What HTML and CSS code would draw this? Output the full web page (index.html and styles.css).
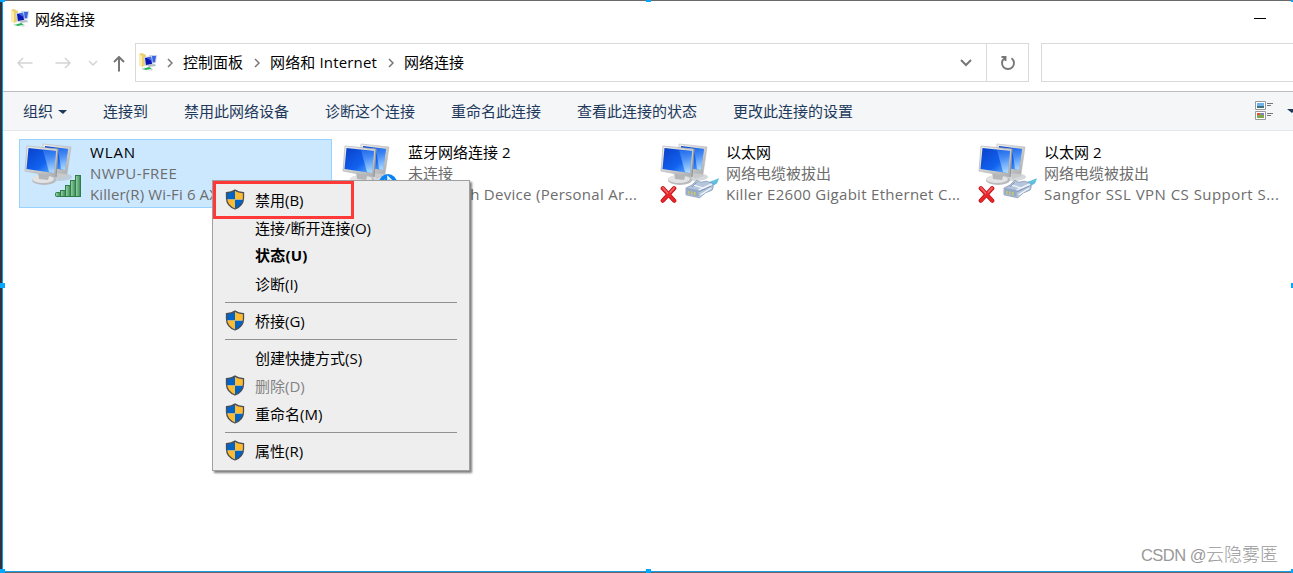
FILE: index.html
```html
<!DOCTYPE html>
<html lang="zh-CN">
<head>
    <meta charset="UTF-8">
    <meta name="viewport" content="width=device-width, initial-scale=1.0">
    <title>网络连接</title>
    <link rel="stylesheet" href="styles.css">
</head>
<body>

<!-- Shared icons -->
<svg class="defs" width="0" height="0">
    <defs>
        <linearGradient id="screenBlue" x1="0" y1="0" x2="1" y2="1">
            <stop offset="0" stop-color="#0a3fc8"/>
            <stop offset="0.6" stop-color="#1163f0"/>
            <stop offset="1" stop-color="#6db8ff"/>
        </linearGradient>
        <linearGradient id="shine" x1="0" y1="0" x2="0" y2="1">
            <stop offset="0" stop-color="#4a92f8" stop-opacity=".4"/>
            <stop offset="1" stop-color="#c8e8ff" stop-opacity=".8"/>
        </linearGradient>
        <linearGradient id="metal" x1="0" y1="0" x2="1" y2="1">
            <stop offset="0" stop-color="#f4f4f2"/>
            <stop offset="1" stop-color="#a9aaac"/>
        </linearGradient>
        <linearGradient id="barGreen" x1="0" y1="0" x2="1" y2="0">
            <stop offset="0" stop-color="#9fd6a8"/>
            <stop offset="1" stop-color="#358a55"/>
        </linearGradient>
        <symbol id="folder" viewBox="0 0 20 20">
            <path d="M1 1 L4 0 L8 2 L8 12 L4 14 L1 12 Z" fill="#ecd070"/>
            <path d="M1 1 L4 3 L4 14 L1 12 Z" fill="#fbedb0"/>
            <path d="M11 2 L19 2 L18 10 L12 11 Z" fill="#c5d3ec"/>
            <path d="M12 3 L18 3 L17 9 L12 10 Z" fill="#3b62dc"/>
            <path d="M6 4 L14 3 L15 12 L7 13 Z" fill="#c9d5ea"/>
            <path d="M7 5 L13 4 L14 11 L8 12 Z" fill="#0a17b4"/>
            <path d="M9 5 L13 4 L13.500 8 Z" fill="#3c6cf0"/>
            <path d="M9 12 L17 11 L18 13 L11 14 Z" fill="#b8c0c8"/>
            <path d="M4 16 L11 14 L14 15.500 L8 17 Z" fill="#25b454"/>
            <path d="M3 15.500 L7 14.500 L6 16.500 Z" fill="#b9ddc2"/>
            <path d="M8 17 L15 16 L14 17.500 Z" fill="#c3cdc8"/>
        </symbol>
        <symbol id="monitors" viewBox="0 0 58 60">
            <ellipse cx="35" cy="34" rx="13" ry="4" fill="#aeb3b9" opacity=".5"/>
            <path d="M32 28 L41 28 L44 33 L34 36 Z" fill="#c8cacc"/>
            <path d="M19 1 L47 4 L43 31 L18 28 Z" fill="url(#metal)" stroke="#b5b7ba" stroke-width=".6"/>
            <path d="M21 3 L44 6 L41 27 L20 24 Z" fill="url(#screenBlue)"/>
            <path d="M34 5 L44 6 L41 27 L37 26 Z" fill="url(#shine)"/>
            <ellipse cx="20" cy="37" rx="12" ry="5" fill="#b8babd"/>
            <ellipse cx="19" cy="36" rx="11" ry="4" fill="#e3e3e3"/>
            <path d="M14 28 L26 30 L24 37 L15 36 Z" fill="#b4b6b8"/>
            <path d="M3 3 L34 6 L32 34 L1 28 Z" fill="url(#metal)" stroke="#b3b5b8" stroke-width=".7"/>
            <path d="M4.500 5 L32 8 L30 30 L2.500 26 Z" fill="url(#screenBlue)"/>
            <path d="M19 7 L32 8 L30 30 L25 29 Z" fill="url(#shine)"/>
            <path d="M34 6 L32 34" stroke="#909397" stroke-width="1"/>
        </symbol>
        <symbol id="signal" viewBox="0 0 27 23">
            <g fill="url(#barGreen)" stroke="#2f7c4b" stroke-width="1">
                <rect x=".5" y="17.500" width="5" height="4" rx="1"/>
                <rect x="5.500" y="15.500" width="5" height="6"/>
                <rect x="10.500" y="10.500" width="5" height="11"/>
                <rect x="15.500" y="5.500" width="5" height="16"/>
                <rect x="20.500" y=".5" width="5" height="21"/>
            </g>
        </symbol>
        <symbol id="cross" viewBox="0 0 18 18">
            <path d="M3 3 L15 16 M15 3 L3 16" stroke="#c01419" stroke-width="4.600" stroke-linecap="round"/>
            <path d="M3 3 L15 16 M15 3 L3 16" stroke="#e8262c" stroke-width="3" stroke-linecap="round"/>
            <path d="M3 2.500 L8 8 M15 2.500 L11 7" stroke="#f0686c" stroke-width="1.600" stroke-linecap="round"/>
        </symbol>
        <symbol id="cable" viewBox="0 0 36 22">
            <path d="M24 4 L35 0 L33 5 L27 9 Z" fill="#5abde0"/>
            <path d="M26 5 L35 1 L31 3 Z" fill="#b5e6f5"/>
            <path d="M1 10 L7 7 L12 2 L16 4 L22 3 L28 5 L29 9 L28 12 L21 15 L15 20 L1 17 Z" fill="#b4c5dc" stroke="#8397b2" stroke-width=".8"/>
            <path d="M2 10 L14 12 L14 19 L2 16 Z" fill="#93a9c6"/>
            <path d="M14 12 L27 6 M9 7 L19 10 L28 6 M16 17 L27 10" stroke="#edf4fb" stroke-width="1.400" fill="none"/>
            <path d="M14 14 L27 8 M7 9 L12 4" stroke="#6f86a8" stroke-width=".8"/>
            <path d="M4 13 v3 M7 13.500 v3.500 M10 14 v3.500" stroke="#d1ca68" stroke-width="1.500"/>
        </symbol>
        <symbol id="shield" viewBox="0 0 20 21">
            <clipPath id="shieldClip"><path d="M10 1 C7.500 3 4.500 3.600 1.500 3.600 V9 C1.500 14 5 18 10 20 C15 18 18.500 14 18.500 9 V3.600 C15.500 3.600 12.500 3 10 1 Z"/></clipPath>
            <g clip-path="url(#shieldClip)">
                <path d="M0 0 H10 V10.500 H0 Z M10 10.500 H20 V21 H10 Z" fill="#0063c6"/>
                <path d="M10 0 H20 V10.500 H10 Z M0 10.500 H10 V21 H0 Z" fill="#fdbb31"/>
            </g>
            <path d="M10 1 C7.500 3 4.500 3.600 1.500 3.600 V9 C1.500 14 5 18 10 20 C15 18 18.500 14 18.500 9 V3.600 C15.500 3.600 12.500 3 10 1 Z" fill="none" stroke="#4b4f55" stroke-width="1.300"/>
        </symbol>
    </defs>
</svg>

<div class="window">
    <header class="title-bar">
        <svg class="title-icon"><use href="#folder"/></svg>
        <span class="title">网络连接</span>
        <span class="minimize"></span>
    </header>

    <nav class="nav-bar">
        <div class="nav-buttons">
            <svg class="arrow" width="16" height="12" viewBox="0 0 16 12"><path d="M6 1 L1 6 L6 11 M1 6 H15.500"/></svg>
            <svg class="arrow forward" width="16" height="12" viewBox="0 0 16 12"><path d="M10 1 L15 6 L10 11 M15 6 H.5"/></svg>
            <svg class="arrow recent" width="10" height="6" viewBox="0 0 10 6"><path d="M1 1 L5 5 L9 1"/></svg>
            <svg class="arrow up" width="12" height="16" viewBox="0 0 12 16"><path d="M1 6 L6 1 L11 6 M6 1 V15.500"/></svg>
        </div>
        <div class="address">
            <svg class="address-icon"><use href="#folder"/></svg>
            <svg class="chevron root" width="6" height="10" viewBox="0 0 6 10"><path d="M1 1 L5 5 L1 9"/></svg>
            <span class="crumb">控制面板</span>
            <svg class="chevron" width="6" height="10" viewBox="0 0 6 10"><path d="M1 1 L5 5 L1 9"/></svg>
            <span class="crumb crumb-internet">网络和 Internet</span>
            <svg class="chevron" width="6" height="10" viewBox="0 0 6 10"><path d="M1 1 L5 5 L1 9"/></svg>
            <span class="crumb">网络连接</span>
            <svg class="chevron dropdown" width="12" height="8" viewBox="0 0 12 8"><path d="M1 1 L6 6 L11 1"/></svg>
            <span class="refresh">
                <svg width="16" height="16" viewBox="0 0 16 16"><path d="M11.500 3.200 A6 6 0 1 1 4.500 3.200 M1.500 2 H5.500 V6" fill="none" stroke="#777" stroke-width="1.900"/></svg>
            </span>
        </div>
        <div class="search"></div>
    </nav>

    <div class="toolbar">
        <span class="tool">组织 <i class="caret"></i></span>
        <span class="tool">连接到</span>
        <span class="tool">禁用此网络设备</span>
        <span class="tool">诊断这个连接</span>
        <span class="tool">重命名此连接</span>
        <span class="tool">查看此连接的状态</span>
        <span class="tool">更改此连接的设置</span>
        <svg class="view-icon" width="18" height="19" viewBox="0 0 18 19">
            <path d="M.5 .5 H10.500 V8.500 H.5 Z M.5 10.500 H10.500 V18.500 H.5 Z" fill="#fff" stroke="#9a9a9a"/>
            <rect x="2" y="2" width="7" height="3" fill="#6fb2f0"/>
            <rect x="2" y="5" width="7" height="2" fill="#3e7375"/>
            <rect x="2" y="12" width="7" height="5" fill="#7da94b"/>
            <rect x="2" y="12" width="3" height="2" fill="#e0553b"/>
            <rect x="6" y="12" width="3" height="2" fill="#8a7bd0"/>
            <path d="M12 2.500 H18 M12 4.500 H16 M12 12.500 H18 M12 14.500 H16" stroke="#777"/>
        </svg>
        <i class="caret view-caret"></i>
    </div>

    <main class="connections">
        <div class="connection selected">
            <div class="device">
                <svg class="monitors"><use href="#monitors"/></svg>
                <svg class="signal"><use href="#signal"/></svg>
            </div>
            <div class="info">
                <div class="name name-wlan">WLAN</div>
                <div class="status status-wlan">NWPU-FREE</div>
                <div class="adapter adapter-wlan">Killer(R) Wi-Fi 6 AX1650s</div>
            </div>
        </div>
        <div class="connection">
            <div class="device">
                <svg class="monitors"><use href="#monitors"/></svg>
                <svg class="bluetooth" width="18" height="18" viewBox="0 0 18 18"><circle cx="9" cy="9" r="9" fill="#0a84f5"/><path d="M5 6 L12 12 L9 15 V3 L12 6 L5 12" fill="none" stroke="#fff" stroke-width="1.500"/></svg>
            </div>
            <div class="info">
                <div class="name">蓝牙网络连接 2</div>
                <div class="status">未连接</div>
                <div class="adapter">Bluetooth Device (Personal Ar...</div>
            </div>
        </div>
        <div class="connection">
            <div class="device">
                <svg class="monitors"><use href="#monitors"/></svg>
                <svg class="cross"><use href="#cross"/></svg>
                <svg class="cable"><use href="#cable"/></svg>
            </div>
            <div class="info">
                <div class="name">以太网</div>
                <div class="status">网络电缆被拔出</div>
                <div class="adapter">Killer E2600 Gigabit Ethernet C...</div>
            </div>
        </div>
        <div class="connection">
            <div class="device">
                <svg class="monitors"><use href="#monitors"/></svg>
                <svg class="cross"><use href="#cross"/></svg>
                <svg class="cable"><use href="#cable"/></svg>
            </div>
            <div class="info">
                <div class="name">以太网 2</div>
                <div class="status">网络电缆被拔出</div>
                <div class="adapter adapter-sangfor">Sangfor SSL VPN CS Support S...</div>
            </div>
        </div>
    </main>
</div>

<!-- Right-click menu -->
<div class="context-menu">
    <div class="menu-item"><svg class="shield"><use href="#shield"/></svg><span>禁用(B)</span></div>
    <div class="menu-item"><span>连接/断开连接(O)</span></div>
    <div class="menu-item default"><span>状态(U)</span></div>
    <div class="menu-item"><span>诊断(I)</span></div>
    <div class="separator"></div>
    <div class="menu-item"><svg class="shield"><use href="#shield"/></svg><span>桥接(G)</span></div>
    <div class="separator"></div>
    <div class="menu-item"><span>创建快捷方式(S)</span></div>
    <div class="menu-item disabled"><svg class="shield"><use href="#shield"/></svg><span>删除(D)</span></div>
    <div class="menu-item"><svg class="shield"><use href="#shield"/></svg><span>重命名(M)</span></div>
    <div class="separator"></div>
    <div class="menu-item"><svg class="shield"><use href="#shield"/></svg><span>属性(R)</span></div>
    <div class="highlight"></div>
</div>

<div class="watermark"><span class="site">CSDN @</span>云隐雾匿</div>

<!-- Selection handles -->
<i class="handle top-left"></i>
<i class="handle top"></i>
<i class="handle top-right"></i>
<i class="handle left"></i>
<i class="handle right"></i>
<i class="handle bottom-left"></i>
<i class="handle bottom"></i>
<i class="handle bottom-right"></i>

</body>
</html>
```
FILE: styles.css
```css
* {
    box-sizing: border-box;
}
body {
    margin: 0;
    width: 1293px;
    height: 573px;
    position: relative;
    overflow: hidden;
    background-color: #fff;
    font-family: "Open Sans", "Noto Sans CJK SC", sans-serif;
    font-size: 15px;
    color: #000;
}
svg {
    display: block;
    flex: none;
}
.defs {
    position: absolute;
}
.window {
    height: 573px;
    border-top: 1px solid #6b696a;
    border-left: 2px solid #30343a;
    border-bottom: 1px solid #666;
    box-shadow: inset 1px 0 0 #00a2f2, inset 0 -1px 0 #1b9be0;
}

/* Title bar */
.title-bar {
    display: flex;
    align-items: center;
    height: 38px;
    padding: 0 27px 3px 8px;
}
.title-icon, .address-icon {
    width: 20px;
    height: 20px;
}
.title {
    margin-left: 5px;
}
.minimize {
    width: 12px;
    height: 1px;
    margin-left: auto;
    background-color: #000;
}

/* Navigation */
.nav-bar {
    display: flex;
    height: 52px;
    padding: 4px 0 9px 1px;
}
.nav-buttons {
    display: flex;
    align-items: center;
    width: 132px;
    padding-left: 14px;
}
.arrow {
    fill: none;
    stroke: #d4d4d4;
    stroke-width: 1.5;
}
.forward {
    margin-left: 22px;
}
.recent {
    margin-left: 17px;
}
.up {
    margin-left: 15px;
    margin-top: 3px;
    stroke: #777;
    stroke-width: 2;
}
.address {
    display: flex;
    align-items: center;
    width: 894px;
    border: 1px solid #d9d9d9;
    padding-left: 2px;
}
.chevron {
    fill: none;
    stroke: #777;
    stroke-width: 1.5;
    margin-left: 11px;
}
.root {
    margin-left: 9px;
}
.crumb {
    margin-left: 10px;
    padding-bottom: 2px;
    white-space: nowrap;
}
.crumb-internet {
    letter-spacing: 0.15px;
}
.dropdown {
    margin-left: auto;
    margin-right: 14px;
    stroke-width: 2;
}
.refresh {
    display: flex;
    align-items: center;
    justify-content: center;
    width: 42px;
    height: 100%;
    border-left: 1px solid #d9d9d9;
}
.search {
    flex: 1;
    margin-left: 12px;
    border: 1px solid #d9d9d9;
    border-right: none;
}

/* Toolbar */
.toolbar {
    display: flex;
    align-items: center;
    height: 40px;
    margin-left: 1px;
    padding: 0 0 2px 20px;
    border-top: 1px solid #b9bdc2;
    border-bottom: 1px solid #e5e7e9;
    background-color: #f4f6f8;
    color: #1e395b;
}
.tool {
    margin-right: 36px;
    white-space: nowrap;
}
.caret {
    display: inline-block;
    margin-left: 1px;
    border: 4.5px solid transparent;
    border-top-color: #1e395b;
    border-bottom: none;
    border-left-width: 5px;
    vertical-align: 3px;
}
.view-icon {
    margin-left: auto;
}
.view-caret {
    margin: 2px -3px 0 14px;
}

/* Connection tiles */
.connections {
    display: grid;
    grid-template-columns: repeat(4, 313px);
    column-gap: 5px;
    padding: 8px 0 0 17px;
}
.connection {
    display: flex;
    height: 69px;
    border: 1px solid transparent;
}
.selected {
    background-color: #cce8ff;
    border-color: #99d1ff;
}
.device {
    position: relative;
    width: 70px;
}
.monitors {
    width: 58px;
    height: 60px;
    margin: 3px 0 0 4px;
}
.signal {
    position: absolute;
    left: 35px;
    top: 35px;
    width: 27px;
    height: 23px;
}
.bluetooth {
    position: absolute;
    left: 41px;
    top: 34px;
}
.cross {
    position: absolute;
    left: 4px;
    top: 45px;
    width: 17px;
    height: 18px;
}
.cable {
    position: absolute;
    left: 29px;
    top: 38px;
    width: 35px;
    height: 22px;
}
.info {
    padding-top: 2px;
    line-height: 21px;
    white-space: nowrap;
    overflow: hidden;
}
.status, .adapter {
    color: #6d6d6d;
}
.adapter {
    letter-spacing: 0.29px;
}
.name-wlan {
    letter-spacing: 0.9px;
}
.status-wlan {
    letter-spacing: 0.4px;
}
.adapter-wlan {
    letter-spacing: 0.12px;
}
.adapter-sangfor {
    letter-spacing: 0.46px;
}

/* Context menu */
.context-menu {
    position: absolute;
    left: 212px;
    top: 180px;
    width: 258px;
    height: 291px;
    padding: 5px 12px 0;
    border: 1px solid #a0a0a0;
    background-color: #eee;
    box-shadow: 2px 2px 2px rgba(0, 0, 0, 0.5);
}
.menu-item {
    display: flex;
    align-items: center;
    height: 28px;
    padding-left: 30px;
    white-space: nowrap;
}
.menu-item span {
    padding-bottom: 2px;
}
.shield {
    width: 20px;
    height: 21px;
    margin-left: -30px;
    margin-right: 10px;
    margin-bottom: 1px;
}
.default {
    font-weight: bold;
}
.default span {
    padding-bottom: 4px;
    letter-spacing: 0.2px;
}
.disabled {
    color: #838383;
}
.separator {
    height: 1px;
    margin: 4px 0;
    background-color: #919191;
}
.highlight {
    position: absolute;
    left: 0;
    top: 0;
    width: 141px;
    height: 38px;
    border: 3px solid #ff3838;
}

.watermark {
    position: absolute;
    right: 15px;
    top: 543px;
    font-family: "Liberation Sans", "Noto Sans CJK SC", sans-serif;
    font-size: 18px;
    font-weight: 300;
    line-height: 24px;
    color: #999;
    white-space: nowrap;
}
.site {
    font-size: 16.5px;
    letter-spacing: -0.5px;
}

/* Selection handles */
.handle {
    position: absolute;
    width: 5px;
    height: 5px;
    background-color: #00a8ff;
}
.top-left, .left, .bottom-left {
    left: 0;
}
.top-right, .right, .bottom-right {
    right: -3px;
}
.top, .bottom {
    left: 646px;
}
.top-left, .top, .top-right {
    top: -3px;
}
.left, .right {
    top: 283px;
}
.bottom-left, .bottom, .bottom-right {
    bottom: -1px;
}
```
